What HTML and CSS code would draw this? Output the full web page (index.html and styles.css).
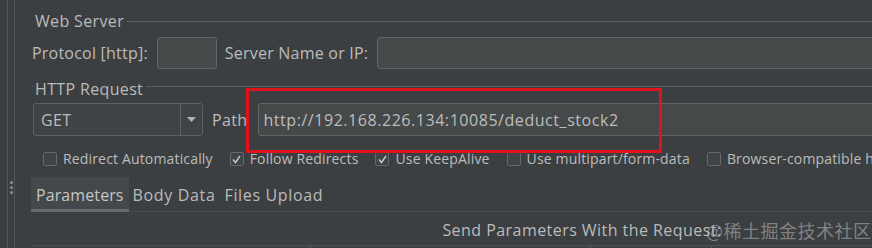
FILE: index.html
```html
<!DOCTYPE html>
<html>
<head>
<meta charset="utf-8">
<link rel="stylesheet" href="styles.css">
</head>
<body>
<div class="app">
  <div class="gutter">
    <div class="gutter-bar">
      <div class="grip"><span></span><span></span><span></span></div>
    </div>
  </div>
  <div class="main">
    <div class="legend"><span class="legend-text">Web Server</span></div>
    <div class="row row-server">
      <label class="label">Protocol [http]:</label>
      <div class="input input-protocol"></div>
      <label class="label">Server Name or IP:</label>
      <div class="input input-grow"></div>
    </div>
    <div class="legend legend-http"><span class="legend-text">HTTP Request</span></div>
    <div class="row row-request">
      <div class="combo">
        <div class="combo-value">GET</div>
        <div class="combo-btn"><svg width="9" height="5" viewBox="0 0 9 5"><path d="M0 0H9L4.5 5Z" fill="#b4b4b4"/></svg></div>
      </div>
      <label class="label label-path">Path</label>
      <div class="input input-grow input-text">http://192.168.226.134:10085/deduct_stock2</div>
    </div>
    <div class="checks">
      <div class="check"><span class="box"></span>Redirect Automatically</div>
      <div class="check"><span class="box checked"><svg width="11" height="11" viewBox="0 0 11 11"><path d="M2 5.5L4.5 8.5L9 2" fill="none" stroke="#c8c8c8" stroke-width="1.4"/></svg></span>Follow Redirects</div>
      <div class="check"><span class="box checked"><svg width="11" height="11" viewBox="0 0 11 11"><path d="M2 5.5L4.5 8.5L9 2" fill="none" stroke="#c8c8c8" stroke-width="1.4"/></svg></span>Use KeepAlive</div>
      <div class="check"><span class="box"></span>Use multipart/form-data</div>
      <div class="check"><span class="box"></span>Browser-compatible headers</div>
    </div>
    <div class="tabs">
      <div class="tab active">Parameters</div>
      <div class="tab">Body Data</div>
      <div class="tab">Files Upload</div>
    </div>
    <div class="send-row">Send Parameters With the Request:</div>
    <div class="table-head">
      <div class="th"></div><div class="th"></div><div class="th"></div><div class="th"></div>
    </div>
  </div>
  <div class="annotation"></div>
  <div class="watermark">@稀土掘金技术社区</div>
</div>
</body>
</html>
```
FILE: styles.css
```css
html, body {
  margin: 0;
  padding: 0;
  background: #3c3f41;
  overflow: hidden;
}
body {
  width: 872px;
  height: 248px;
  font-family: "Open Sans", "Noto Sans", sans-serif;
  color: #bbbbbb;
}
.app {
  position: relative;
  display: flex;
  height: 248px;
}
.gutter {
  width: 31px;
  flex: none;
}
.gutter-bar {
  margin-left: 7px;
  width: 8px;
  height: 100%;
  border-left: 1px solid #535658;
  border-right: 1px solid #535658;
  display: flex;
  flex-direction: column;
  align-items: center;
  padding-top: 181px;
  box-sizing: border-box;
}
.grip {
  display: flex;
  flex-direction: column;
  gap: 2px;
}
.grip span {
  width: 3px;
  height: 3px;
  border-radius: 50%;
  background: #8d8f91;
}
.main {
  width: 1096px;
  flex: none;
  display: flex;
  flex-direction: column;
  padding-top: 11px;
  letter-spacing: 0.35px;
}
.legend {
  display: flex;
  align-items: center;
  height: 20px;
  font-size: 16px;
  line-height: 20px;
}
.legend::before {
  content: "";
  width: 2px;
  border-top: 1px solid #5a5d5f;
  margin-right: 2px;
}
.legend::after {
  content: "";
  flex: 1;
  border-top: 1px solid #5a5d5f;
  margin-left: 3px;
}
.legend-http {
  margin-top: 10px;
  align-items: flex-start;
}
.legend-http::before, .legend-http::after {
  margin-top: 7px;
}
.row {
  display: flex;
  align-items: center;
  font-size: 16px;
  line-height: 20px;
}
.row-server {
  margin-top: 6px;
  height: 32px;
  gap: 8px;
  letter-spacing: 0.22px;
}
.row-server .label:first-child {
  margin-left: 1px;
}
.row-server .label + .input {
  margin-left: 1px;
}
.input {
  box-sizing: border-box;
  height: 32px;
  background: #45494a;
  border: 1px solid #646464;
  border-radius: 3px;
}
.input-protocol {
  width: 60px;
}
.input-grow {
  flex: 1;
}
.row-request {
  margin-top: 4px;
  height: 33px;
}
.row-request .input {
  height: 33px;
}
.combo {
  box-sizing: border-box;
  margin-left: 2px;
  width: 170px;
  height: 33px;
  display: flex;
  border: 1px solid #5e6163;
  border-radius: 3px;
  background: #404345;
}
.combo-value {
  flex: 1;
  padding-left: 7px;
  display: flex;
  align-items: center;
}
.combo-btn {
  width: 21px;
  border-left: 1px solid #5e6163;
  display: flex;
  align-items: center;
  justify-content: center;
}
.label-path {
  margin-left: 9px;
  margin-right: 11px;
}
.input-text {
  display: flex;
  align-items: center;
  padding-left: 4px;
  color: #bdbdbd;
  white-space: nowrap;
  letter-spacing: 0.55px;
}
.checks {
  margin-top: 13px;
  margin-left: 12px;
  display: flex;
  gap: 17px;
  height: 20px;
  align-items: center;
  font-size: 14px;
  line-height: 20px;
  white-space: nowrap;
  letter-spacing: 0.16px;
}
.check {
  display: flex;
  align-items: center;
  gap: 6px;
}
.box {
  box-sizing: border-box;
  width: 14px;
  height: 14px;
  border: 1px solid #66696b;
  border-radius: 2px;
  background: #414446;
  display: flex;
  align-items: center;
  justify-content: center;
}
.tabs {
  margin-top: 8px;
  height: 35px;
  box-sizing: border-box;
  display: flex;
  border-bottom: 1px solid #4a4d4f;
  font-size: 16px;
  letter-spacing: 0.65px;
}
.tab {
  box-sizing: border-box;
  height: 35px;
  margin-bottom: -1px;
  padding: 3px 5px 0;
  display: flex;
  align-items: center;
  border-bottom: 3px solid transparent;
  color: #bbbbbb;
}
.tab.active {
  background: #45484a;
  border-bottom-color: #686b6d;
  color: #c6c6c6;
  letter-spacing: 0.1px;
}
.tab + .tab {
  padding-left: 4px;
}
.send-row {
  margin-top: 8px;
  height: 20px;
  line-height: 20px;
  font-size: 16px;
  text-align: center;
  letter-spacing: 0.45px;
  padding-left: 6px;
}
.table-head {
  margin-top: 5px;
  display: grid;
  grid-template-columns: 279px 280px 121px 1fr;
  height: 10px;
  border-top: 1px solid #4e5153;
  background: #3e4143;
}
.th + .th {
  border-left: 1px solid #55585a;
}
.annotation {
  position: absolute;
  left: 246px;
  top: 88px;
  width: 416px;
  height: 65px;
  box-sizing: border-box;
  border: 3px solid #e0121b;
}
.watermark {
  position: absolute;
  left: 706px;
  top: 218px;
  font-family: "Noto Sans CJK SC", sans-serif;
  font-size: 18px;
  line-height: 24px;
  letter-spacing: 0.5px;
  color: rgba(190, 190, 190, 0.55);
  white-space: nowrap;
}
```
